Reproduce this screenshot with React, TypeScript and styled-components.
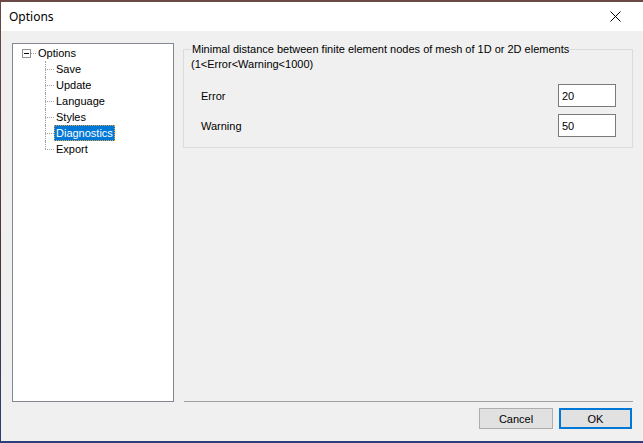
import { FunctionComponent } from "react"
import styled, { createGlobalStyle } from "styled-components"

const GlobalStyle = createGlobalStyle`
  html, body {
    margin: 0;
    padding: 0;
  }
  body {
    width: 643px;
    height: 443px;
    overflow: hidden;
    background: linear-gradient(#6b4a46, #4a3436 60%, #2c3f78);
    font-family: "Liberation Sans", Arial, sans-serif;
    font-size: 11px;
    color: #000;
  }
`

const treeChildren = ["Save", "Update", "Language", "Styles", "Diagnostics", "Export"]

const App: FunctionComponent = () => {
  return (
    <>
      <GlobalStyle />
      <Window>
        <TitleBar>
          <Title>Options</Title>
          <CloseButton>
            <svg width="11" height="11" viewBox="0 0 11 11">
              <path d="M0.5 0.5 L10.5 10.5 M10.5 0.5 L0.5 10.5" stroke="#000" strokeWidth="1" fill="none" />
            </svg>
          </CloseButton>
        </TitleBar>
        <Client>
          <Main>
            <TreePanel>
              <RootRow>
                <Expander>
                  <svg width="9" height="9" viewBox="0 0 9 9">
                    <rect x="0.5" y="0.5" width="8" height="8" fill="#fff" stroke="#919191" />
                    <path d="M2 4.5 H7" stroke="#000" />
                  </svg>
                </Expander>
                <RootLine />
                <NodeLabel>Options</NodeLabel>
              </RootRow>
              <ChildList>
                {treeChildren.map((name, i) => (
                  <ChildRow key={name} $last={i === treeChildren.length - 1}>
                    <NodeLabel $selected={name === "Diagnostics"}>{name}</NodeLabel>
                  </ChildRow>
                ))}
              </ChildList>
            </TreePanel>
            <RightColumn>
              <GroupBox>
                <Legend>
                  <LegendText>
                    Minimal distance between finite element nodes of mesh of 1D or 2D elements
                    <br />
                    (1&lt;Error&lt;Warning&lt;1000)
                  </LegendText>
                </Legend>
                <Fields>
                  <FieldRow>
                    <FieldLabel>Error</FieldLabel>
                    <NumberBox defaultValue="20" />
                  </FieldRow>
                  <FieldRow>
                    <FieldLabel>Warning</FieldLabel>
                    <NumberBox defaultValue="50" />
                  </FieldRow>
                </Fields>
              </GroupBox>
              <Separator />
            </RightColumn>
          </Main>
          <Footer>
            <DialogButton>Cancel</DialogButton>
            <DialogButton $default>OK</DialogButton>
          </Footer>
        </Client>
      </Window>
    </>
  )
}

const Window = styled.div`
  margin: 2px 0 0 1px;
  width: 642px;
  height: 439px;
  background: #f0f0f0;
  display: flex;
  flex-direction: column;
`

const TitleBar = styled.div`
  height: 29px;
  background: #fff;
  display: flex;
  align-items: center;
  justify-content: space-between;
  padding-left: 8px;
`

const Title = styled.div`
  font-family: "Noto Sans", "Open Sans", sans-serif;
  font-size: 12px;
  color: #000;
`

const CloseButton = styled.div`
  width: 46px;
  height: 29px;
  margin-right: 5px;
  display: flex;
  align-items: center;
  justify-content: center;
`

const Client = styled.div`
  flex: 1;
  display: flex;
  flex-direction: column;
  padding: 12px 10px 12px 11px;
`

const Main = styled.div`
  display: grid;
  grid-template-columns: 162px 1fr;
  column-gap: 9px;
  height: 359px;
`

const TreePanel = styled.div`
  background: #fff;
  border: 1px solid #828790;
  padding-top: 1px;
`

const RootRow = styled.div`
  display: flex;
  align-items: center;
  height: 16px;
  padding-left: 9px;
`

const Expander = styled.span`
  display: flex;
  width: 9px;
  height: 9px;
`

const RootLine = styled.span`
  width: 5px;
  border-top: 1px dotted #a0a0a0;
`

const NodeLabel = styled.span<{ $selected?: boolean }>`
  line-height: 14px;
  padding: 0 1px;
  border: 1px dotted ${(p) => (p.$selected ? "#e8a33c" : "transparent")};
  background: ${(p) => (p.$selected ? "#0078d7" : "transparent")};
  color: ${(p) => (p.$selected ? "#fff" : "#000")};
`

const ChildList = styled.div`
  padding-left: 32px;
`

const ChildRow = styled.div<{ $last: boolean }>`
  position: relative;
  display: flex;
  align-items: center;
  height: 16px;
  padding-left: 9px;

  &::before {
    content: "";
    position: absolute;
    left: 0;
    top: 8px;
    width: 9px;
    border-top: 1px dotted #a0a0a0;
  }

  &::after {
    content: "";
    position: absolute;
    left: 0;
    top: 0;
    height: ${(p) => (p.$last ? "8px" : "16px")};
    border-left: 1px dotted #a0a0a0;
  }
`

const RightColumn = styled.div`
  display: flex;
  flex-direction: column;
  justify-content: space-between;
`

const GroupBox = styled.div`
  margin-top: 6px;
  border: 1px solid #dcdcdc;
  padding: 0 16px 10px 17px;
`

const Legend = styled.div`
  margin: -8px 0 0 -10px;
  line-height: 15px;
`

const LegendText = styled.span`
  background: #f0f0f0;
  padding: 0 3px 0 1px;
`

const Fields = styled.div`
  margin-top: 12px;
  display: flex;
  flex-direction: column;
  gap: 7px;
`

const FieldRow = styled.div`
  display: flex;
  align-items: center;
  justify-content: space-between;
  height: 23px;
`

const FieldLabel = styled.span`
  padding-top: 1px;
`

const NumberBox = styled.input`
  box-sizing: border-box;
  width: 58px;
  height: 23px;
  border: 1px solid #7a7a7a;
  background: #fff;
  padding: 0 3px;
  font-family: "Liberation Sans", Arial, sans-serif;
  font-size: 11px;
  color: #000;
  outline: none;
`

const Separator = styled.div`
  height: 1px;
  margin-left: 1px;
  background: #a0a0a0;
`

const Footer = styled.div`
  display: flex;
  justify-content: flex-end;
  gap: 6px;
  margin-top: 6px;
  padding-right: 1px;
`

const DialogButton = styled.button<{ $default?: boolean }>`
  box-sizing: border-box;
  width: ${(p) => (p.$default ? "73px" : "74px")};
  height: 21px;
  padding: 0;
  background: #e1e1e1;
  border: ${(p) => (p.$default ? "2px solid #0078d7" : "1px solid #adadad")};
  font-family: "Liberation Sans", Arial, sans-serif;
  font-size: 11px;
  color: #000;
`

export default App
